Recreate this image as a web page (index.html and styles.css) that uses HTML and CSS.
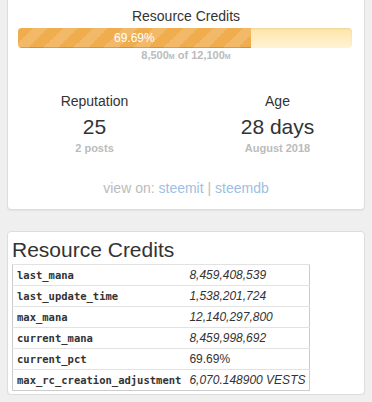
FILE: index.html
```html
<!DOCTYPE html>
<html lang="en">
<head>
    <meta charset="UTF-8">
    <meta name="viewport" content="width=device-width, initial-scale=1.0">
    <title>Account - Resource Credits</title>
    <link rel="stylesheet" href="styles.css">
</head>
<body>
    <div class="panel summary">
        <div class="rc-title">Resource Credits</div>
        <div class="progress">
            <div class="progress-bar" style="width: 69.69%">69.69%</div>
        </div>
        <div class="muted rc-amount">8,500<small>M</small> of 12,100<small>M</small></div>

        <div class="stats">
            <div class="stat">
                <div class="stat-label">Reputation</div>
                <div class="stat-value">25</div>
                <div class="muted">2 posts</div>
            </div>
            <div class="stat">
                <div class="stat-label">Age</div>
                <div class="stat-value">28 days</div>
                <div class="muted">August 2018</div>
            </div>
        </div>

        <div class="view-on">
            view on: <a href="#">steemit</a> | <a href="#">steemdb</a>
        </div>
    </div>

    <div class="panel details">
        <h2>Resource Credits</h2>
        <table class="kv">
            <tr><th>last_mana</th><td><i>8,459,408,539</i></td></tr>
            <tr><th>last_update_time</th><td><i>1,538,201,724</i></td></tr>
            <tr><th>max_mana</th><td><i>12,140,297,800</i></td></tr>
            <tr><th>current_mana</th><td><i>8,459,998,692</i></td></tr>
            <tr><th>current_pct</th><td>69.69%</td></tr>
            <tr><th>max_rc_creation_adjustment</th><td><i>6,070.148900 VESTS</i></td></tr>
        </table>
    </div>
</body>
</html>
```

FILE: styles.css
```css
* {
    margin: 0;
    padding: 0;
    box-sizing: border-box;
}

body {
    font-family: 'Liberation Sans', Arial, sans-serif;
    font-size: 14px;
    line-height: 20px;
    color: #333;
    background: #efefef;
    padding: 0 7px;
}

.panel {
    background: #fff;
    border: 1px solid #ddd;
    border-radius: 4px;
    box-shadow: 0 1px 1px rgba(0, 0, 0, 0.05);
}

.summary {
    margin-top: -4px;
    padding: 9px 10px 11px;
    text-align: center;
}

.rc-title {
    font-size: 14px;
    line-height: 20px;
}

.progress {
    margin: 2px 2px 0 0;
    height: 20px;
    border-radius: 4px;
    overflow: hidden;
    background: linear-gradient(#ffe5a6, #fff3d6);
    box-shadow: inset 0 1px 2px rgba(0, 0, 0, 0.08);
    text-align: left;
}

.progress-bar {
    height: 100%;
    color: #fff;
    font-size: 12px;
    line-height: 20px;
    text-align: center;
    background-color: #f0ad4e;
    background-image: linear-gradient(-45deg, rgba(255, 255, 255, 0.15) 25%, transparent 25%, transparent 50%, rgba(255, 255, 255, 0.15) 50%, rgba(255, 255, 255, 0.15) 75%, transparent 75%, transparent);
    background-size: 30px 30px;
    box-shadow: inset 0 -1px 0 rgba(0, 0, 0, 0.15);
}

.muted {
    color: #bbb;
    font-size: 11px;
    line-height: 15px;
    font-weight: bold;
}

.muted small {
    font-size: 7px;
}

.stats {
    display: grid;
    grid-template-columns: 1fr 1fr;
    margin: 27px -15px 0;
}

.stat-label {
    font-size: 14px;
    line-height: 20px;
}

.stat-value {
    font-size: 21px;
    line-height: 24px;
    margin: 4px 0 2px;
}

.view-on {
    margin-top: 22px;
    color: #bbb;
}

.view-on a {
    color: #9dc0e2;
    text-decoration: none;
}

.details {
    margin-top: 21px;
    padding: 5px 4px 3px;
}

h2 {
    font-size: 21px;
    font-weight: normal;
    line-height: 26px;
}

.kv {
    margin-top: 1px;
    border-collapse: collapse;
    border: 1px solid #ccc;
    font-size: 12px;
}

.kv th,
.kv td {
    height: 21px;
    padding: 0 4px;
    border-top: 1px solid #e2e2e2;
    text-align: left;
    white-space: nowrap;
}

.kv th {
    font-family: 'DejaVu Sans Mono', 'Liberation Mono', monospace;
    font-size: 10.5px;
    font-weight: bold;
    color: #333;
}
```
